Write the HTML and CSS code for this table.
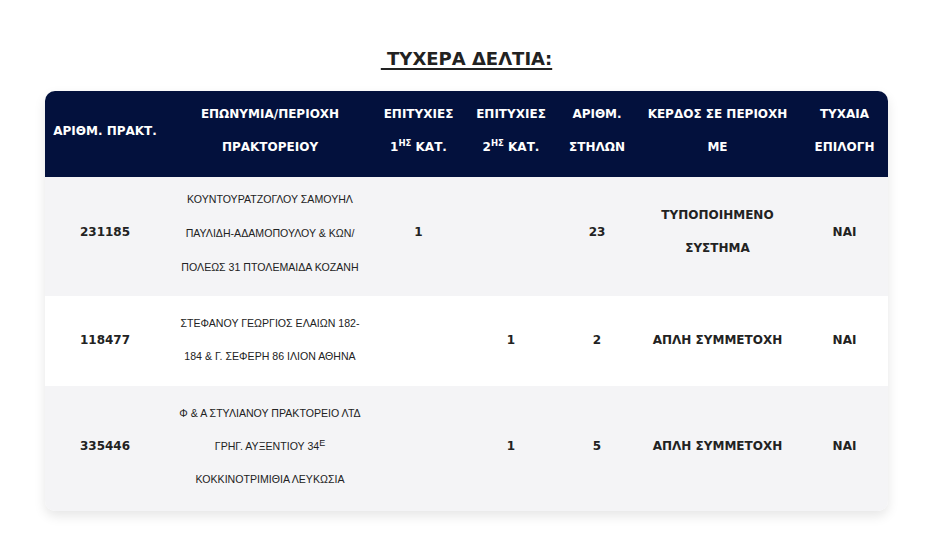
FILE: index.html
```html
<!DOCTYPE html>
<html lang="el">
<head>
<meta charset="utf-8">
<title>ΤΥΧΕΡΑ ΔΕΛΤΙΑ</title>
<link rel="stylesheet" href="styles.css">
</head>
<body>
<main class="page">
  <h2 class="title"><u>&nbsp;ΤΥΧΕΡΑ ΔΕΛΤΙΑ:</u></h2>
  <div class="card">
    <table class="wins">
      <colgroup>
        <col class="c1"><col class="c2"><col class="c3"><col class="c4"><col class="c5"><col class="c6"><col class="c7">
      </colgroup>
      <thead>
        <tr>
          <th>ΑΡΙΘΜ. ΠΡΑΚΤ.</th>
          <th>ΕΠΩΝΥΜΙΑ/ΠΕΡΙΟΧΗ<br>ΠΡΑΚΤΟΡΕΙΟΥ</th>
          <th>ΕΠΙΤΥΧΙΕΣ<br>1<sup>ΗΣ</sup> ΚΑΤ.</th>
          <th>ΕΠΙΤΥΧΙΕΣ<br>2<sup>ΗΣ</sup> ΚΑΤ.</th>
          <th>ΑΡΙΘΜ.<br>ΣΤΗΛΩΝ</th>
          <th>ΚΕΡΔΟΣ ΣΕ ΠΕΡΙΟΧΗ<br>ΜΕ</th>
          <th>ΤΥΧΑΙΑ<br>ΕΠΙΛΟΓΗ</th>
        </tr>
      </thead>
      <tbody>
        <tr class="grey first">
          <td>231185</td>
          <td class="addr">ΚΟΥΝΤΟΥΡΑΤΖΟΓΛΟΥ ΣΑΜΟΥΗΛ<br>ΠΑΥΛΙΔΗ-ΑΔΑΜΟΠΟΥΛΟΥ &amp; ΚΩΝ/<br>ΠΟΛΕΩΣ 31 ΠΤΟΛΕΜΑΙΔΑ ΚΟΖΑΝΗ</td>
          <td>1</td>
          <td></td>
          <td>23</td>
          <td>ΤΥΠΟΠΟΙΗΜΕΝΟ<br>ΣΥΣΤΗΜΑ</td>
          <td>ΝΑΙ</td>
        </tr>
        <tr class="white">
          <td>118477</td>
          <td class="addr">ΣΤΕΦΑΝΟΥ ΓΕΩΡΓΙΟΣ ΕΛΑΙΩΝ 182-<br>184 &amp; Γ. ΣΕΦΕΡΗ 86 ΙΛΙΟΝ ΑΘΗΝΑ</td>
          <td></td>
          <td>1</td>
          <td>2</td>
          <td>ΑΠΛΗ ΣΥΜΜΕΤΟΧΗ</td>
          <td>ΝΑΙ</td>
        </tr>
        <tr class="grey last">
          <td>335446</td>
          <td class="addr">Φ &amp; Α ΣΤΥΛΙΑΝΟΥ ΠΡΑΚΤΟΡΕΙΟ ΛΤΔ<br>ΓΡΗΓ. ΑΥΞΕΝΤΙΟΥ 34<sup>Ε</sup><br>ΚΟΚΚΙΝΟΤΡΙΜΙΘΙΑ ΛΕΥΚΩΣΙΑ</td>
          <td></td>
          <td>1</td>
          <td>5</td>
          <td>ΑΠΛΗ ΣΥΜΜΕΤΟΧΗ</td>
          <td>ΝΑΙ</td>
        </tr>
      </tbody>
    </table>
  </div>
</main>
</body>
</html>
```

FILE: styles.css
```css
html, body {
  margin: 0;
  padding: 0;
  background: #ffffff;
}

.page {
  padding: 47px 0 40px 45px;
  width: 843px;
}

.title {
  margin: 0 0 20px 0;
  text-align: center;
  font-family: "DejaVu Sans", Verdana, sans-serif;
  font-weight: bold;
  font-size: 18px;
  line-height: 24px;
  color: #222222;
}

.title u {
  text-decoration-thickness: 2px;
  text-underline-offset: 3px;
}

.card {
  border-radius: 10px;
  overflow: hidden;
  box-shadow: 0 5px 12px rgba(0, 0, 0, 0.10);
}

.wins {
  width: 843px;
  border-collapse: collapse;
  table-layout: fixed;
  font-family: "DejaVu Sans", Verdana, sans-serif;
  font-size: 12px;
  font-weight: bold;
  color: #222222;
}

.c1 { width: 120px; }
.c2 { width: 210px; }
.c3 { width: 87px; }
.c4 { width: 98px; }
.c5 { width: 74px; }
.c6 { width: 167px; }
.c7 { width: 87px; }

.wins th {
  background: #03113d;
  color: #ffffff;
  font-size: 12px;
  line-height: 33px;
  padding: 7px 3px 13px;
  text-align: center;
  vertical-align: middle;
}

.wins td {
  line-height: 33px;
  padding: 11px 4px 13px;
  text-align: center;
  vertical-align: middle;
}

.wins .first td {
  padding-top: 5px;
  padding-bottom: 14px;
}

.wins .last td {
  padding-bottom: 15px;
}

.wins sup {
  font-size: 8.5px;
  line-height: 0;
  vertical-align: 5px;
}

.wins td.addr {
  font-family: "Liberation Sans", Arial, sans-serif;
  font-weight: normal;
  font-size: 10.6px;
  color: #222222;
}

.wins .first td.addr {
  line-height: 34px;
  padding-bottom: 12px;
}

.wins td.addr sup {
  font-size: 9px;
  vertical-align: 4px;
}

.grey td { background: #f4f4f6; }
.white td { background: #ffffff; }
```
